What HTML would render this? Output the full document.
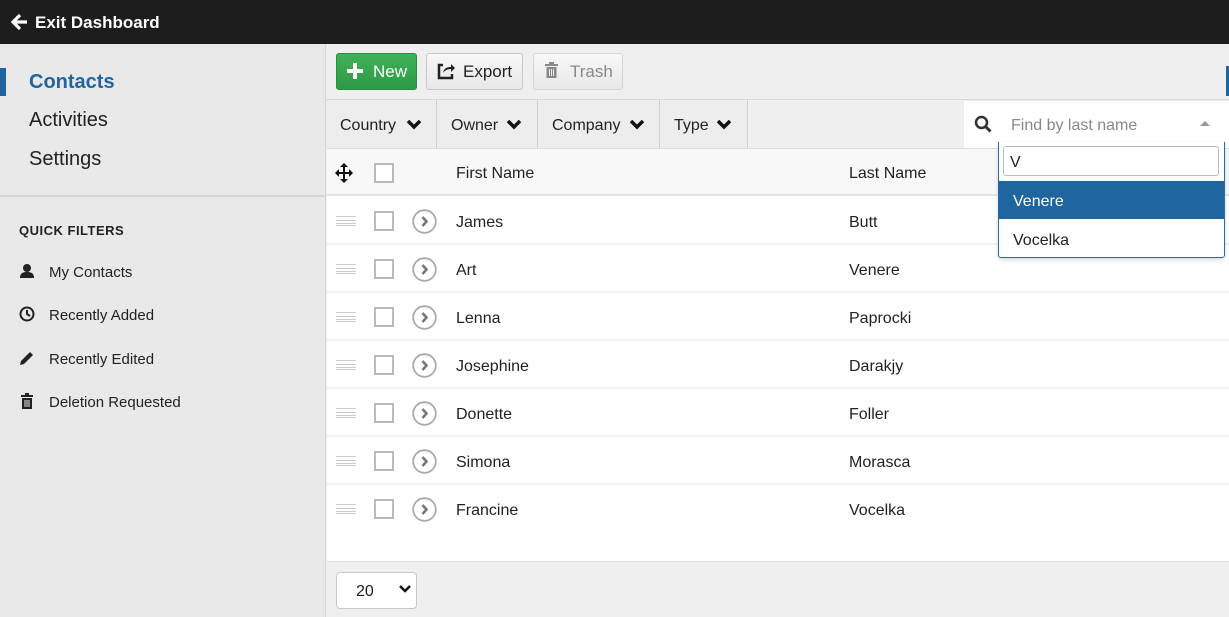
<!DOCTYPE html>
<html><head><meta charset="utf-8"><style>
*{box-sizing:border-box;margin:0;padding:0}
body{width:1229px;height:617px;overflow:hidden;font-family:"Liberation Sans",sans-serif;background:#efefef;position:relative;color:#222}
.abs{position:absolute}
.top{left:0;top:0;width:1229px;height:44px;background:#1d1d1d;color:#fff;font-size:17px;font-weight:bold}
.side{left:0;top:44px;width:326px;height:573px;background:#e9e9e9;border-right:1px solid #d4d4d4}
.nav{font-size:20px;left:29px}
.qf{font-size:15px;left:49px;color:#222}
.btn{top:53px;height:37px;border:1px solid #c8c8c8;border-radius:3px;background:linear-gradient(#f8f8f8,#e8e8e8);font-size:17px;line-height:35px;padding-left:36px;color:#222}
.filt{top:100px;height:48px;border-right:1px solid #d0d0d0;font-size:16px;line-height:52px;padding-left:14px;background:#ededed}
.row{left:327px;width:902px;height:48px;background:#fff;border-bottom:2px solid #f1f1f1}
.row span{position:absolute;top:2px;line-height:48px;font-size:16px}
.cb{position:absolute;width:20px;height:20px;border:2px solid #b9b9b9;background:#fff}
.hand{position:absolute;left:9px;top:19px;width:20px;height:10px;border-top:1px solid #ccc;border-bottom:1px solid #ccc}
.hand:after{content:"";position:absolute;left:0;top:3px;width:20px;height:2px;border-top:1px solid #ccc;border-bottom:1px solid #ccc}
.circ{position:absolute;left:85px;top:12px;width:25px;height:25px}
</style></head><body>
<div class="abs top"><svg class="abs" style="left:11px;top:13px" width="18" height="18" viewBox="0 0 18 18"><path d="M9 2L2 9l7 7M2 9h14" stroke="#fff" stroke-width="3.2" fill="none"/></svg><span class="abs" style="left:35px;top:13px">Exit Dashboard</span></div>
<div class="abs side">
<div class="abs" style="left:0;top:24px;width:6px;height:28px;background:#1f65a0"></div>
<div class="abs nav" style="top:27px;color:#1f65a0;font-weight:bold">Contacts</div>
<div class="abs nav" style="top:65px">Activities</div>
<div class="abs nav" style="top:104px">Settings</div>
<div class="abs" style="left:0;top:151px;width:326px;height:2px;background:#d6d6d6"></div>
<div class="abs" style="left:19px;top:179px;font-size:13px;font-weight:bold;letter-spacing:.5px">QUICK FILTERS</div>
<svg class="abs" style="left:19px;top:219px" width="16" height="16"><circle cx="8" cy="5" r="4" fill="#222"/><path d="M1 15c0-5 3-6 7-6s7 1 7 6z" fill="#222"/></svg>
<div class="abs qf" style="top:220px">My Contacts</div>
<svg class="abs" style="left:19px;top:262px" width="16" height="16"><circle cx="8" cy="8" r="6.5" stroke="#222" stroke-width="2" fill="none"/><path d="M8 4v4l3 2" stroke="#222" stroke-width="2" fill="none"/></svg>
<div class="abs qf" style="top:263px">Recently Added</div>
<svg class="abs" style="left:19px;top:306px" width="16" height="16"><path d="M1 15l1-4 9-9 3 3-9 9z" fill="#222"/></svg>
<div class="abs qf" style="top:307px">Recently Edited</div>
<svg class="abs" style="left:19px;top:349px" width="16" height="17"><path d="M2 3h12M6 1h4" stroke="#222" stroke-width="2"/><path d="M3 5h10v11H3z" fill="#222"/><path d="M6 7v7M8 7v7M10 7v7" stroke="#e9e9e9" stroke-width="1"/></svg>
<div class="abs qf" style="top:350px">Deletion Requested</div>
</div>
<div class="abs" style="left:1226px;top:66px;width:3px;height:30px;background:#1f65a0"></div>
<div class="abs btn" style="left:336px;width:81px;background:linear-gradient(#40b158,#2d9a45);border-color:#2b8e40;color:#fff">New</div>
<svg class="abs" style="left:346px;top:62px" width="18" height="18"><path d="M9 1v16M1 9h16" stroke="#fff" stroke-width="4"/></svg>
<div class="abs btn" style="left:426px;width:97px">Export</div>
<svg class="abs" style="left:437px;top:62px" width="18" height="18"><path d="M6 3H2v13h13v-4" stroke="#222" stroke-width="2.5" fill="none"/><path d="M6 11c1-5 4-6 8-6V2l4 4-4 4V7c-3 0-6 1-8 4z" fill="#222"/></svg>
<div class="abs btn" style="left:533px;width:90px;color:#888;border-color:#d5d5d5">Trash</div>
<svg class="abs" style="left:544px;top:62px" width="15" height="17"><path d="M1 3h13M5 1h5" stroke="#888" stroke-width="2"/><path d="M2.5 5h10v11h-10z" fill="#888"/><path d="M5.5 7v7M7.5 7v7M9.5 7v7" stroke="#eee" stroke-width="1"/></svg>
<div class="abs" style="left:326px;top:99px;width:903px;height:1px;background:#d8d8d8"></div>
<div class="abs filt" style="left:326px;width:111px">Country</div>
<div class="abs filt" style="left:437px;width:101px">Owner</div>
<div class="abs filt" style="left:538px;width:122px">Company</div>
<div class="abs filt" style="left:660px;width:88px">Type</div>
<svg class="abs" style="left:406px;top:119px" width="16" height="12"><path d="M2 2l6 6 6-6" stroke="#111" stroke-width="3.5" fill="none"/></svg>
<svg class="abs" style="left:506px;top:119px" width="16" height="12"><path d="M2 2l6 6 6-6" stroke="#111" stroke-width="3.5" fill="none"/></svg>
<svg class="abs" style="left:629px;top:119px" width="16" height="12"><path d="M2 2l6 6 6-6" stroke="#111" stroke-width="3.5" fill="none"/></svg>
<svg class="abs" style="left:716px;top:119px" width="16" height="12"><path d="M2 2l6 6 6-6" stroke="#111" stroke-width="3.5" fill="none"/></svg>
<div class="abs" style="left:964px;top:101px;width:265px;height:47px;background:#fff"></div>
<svg class="abs" style="left:974px;top:115px" width="18" height="18"><circle cx="7.5" cy="7.5" r="5.5" stroke="#333" stroke-width="2.5" fill="none"/><path d="M11.5 11.5l5 5" stroke="#333" stroke-width="3"/></svg>
<div class="abs" style="left:1011px;top:117px;font-size:16px;color:#888">Find by last name</div>
<div class="abs" style="left:1200px;top:121px;border:5px solid transparent;border-bottom:5px solid #999;border-top:0"></div>
<div class="abs" style="left:327px;top:148px;width:902px;height:48px;background:#f8f8f8;border-top:1px solid #ddd;border-bottom:2px solid #e4e4e4"></div>
<svg class="abs" style="left:335px;top:163px" width="18" height="20"><path d="M9 1v18M1 10h16" stroke="#111" stroke-width="2"/><path d="M9 0l-4 4h8zM9 20l-4-4h8zM0 10l4-4v8zM18 10l-4-4v8z" fill="#111"/></svg>
<div class="cb" style="left:374px;top:163px"></div>
<div class="abs" style="left:456px;top:165px;font-size:16px">First Name</div>
<div class="abs" style="left:849px;top:165px;font-size:16px">Last Name</div>
<div class="abs" style="left:327px;top:196px;width:902px;height:366px;background:#fff;border-bottom:1px solid #ddd"></div>
<svg width="0" height="0" style="position:absolute"><defs><symbol id="c" viewBox="0 0 25 25"><circle cx="12.5" cy="12.5" r="11.3" stroke="#aaa" stroke-width="1.8" fill="none"/><path d="M10.5 8l4 4.5-4 4.5" stroke="#777" stroke-width="2.6" fill="none"/></symbol></defs></svg>
<div class="abs row" style="top:197px"><div class="hand"></div><div class="cb" style="left:47px;top:14px"></div><svg class="circ"><use href="#c"/></svg><span style="left:129px">James</span><span style="left:522px">Butt</span></div>
<div class="abs row" style="top:245px"><div class="hand"></div><div class="cb" style="left:47px;top:14px"></div><svg class="circ"><use href="#c"/></svg><span style="left:129px">Art</span><span style="left:522px">Venere</span></div>
<div class="abs row" style="top:293px"><div class="hand"></div><div class="cb" style="left:47px;top:14px"></div><svg class="circ"><use href="#c"/></svg><span style="left:129px">Lenna</span><span style="left:522px">Paprocki</span></div>
<div class="abs row" style="top:341px"><div class="hand"></div><div class="cb" style="left:47px;top:14px"></div><svg class="circ"><use href="#c"/></svg><span style="left:129px">Josephine</span><span style="left:522px">Darakjy</span></div>
<div class="abs row" style="top:389px"><div class="hand"></div><div class="cb" style="left:47px;top:14px"></div><svg class="circ"><use href="#c"/></svg><span style="left:129px">Donette</span><span style="left:522px">Foller</span></div>
<div class="abs row" style="top:437px"><div class="hand"></div><div class="cb" style="left:47px;top:14px"></div><svg class="circ"><use href="#c"/></svg><span style="left:129px">Simona</span><span style="left:522px">Morasca</span></div>
<div class="abs row" style="top:485px;border:none"><div class="hand"></div><div class="cb" style="left:47px;top:14px"></div><svg class="circ"><use href="#c"/></svg><span style="left:129px">Francine</span><span style="left:522px">Vocelka</span></div>
<div class="abs" style="left:336px;top:572px;width:81px;height:37px;border:1px solid #c8c8c8;border-radius:4px;background:#fff;font-size:16px;padding:10px 0 0 19px">20</div>
<svg class="abs" style="left:399px;top:585px" width="12" height="9"><path d="M1 1l5 5 5-5" stroke="#111" stroke-width="2.5" fill="none"/></svg>
<div class="abs" style="left:998px;top:142px;width:227px;height:116px;background:#fff;border:1px solid #2a6aa4;border-top:none;border-radius:0 0 3px 3px;box-shadow:0 2px 4px rgba(0,0,0,.15)"></div>
<div class="abs" style="left:1003px;top:146px;width:216px;height:30px;border:1px solid #bbb;border-radius:3px;font-size:16px;padding:7px 0 0 6px">V</div>
<div class="abs" style="left:999px;top:181px;width:225px;height:38px;background:#1f65a0;color:#fff;font-size:16px;padding:12px 0 0 14px">Venere</div>
<div class="abs" style="left:1013px;top:232px;font-size:16px">Vocelka</div>
</body></html>
